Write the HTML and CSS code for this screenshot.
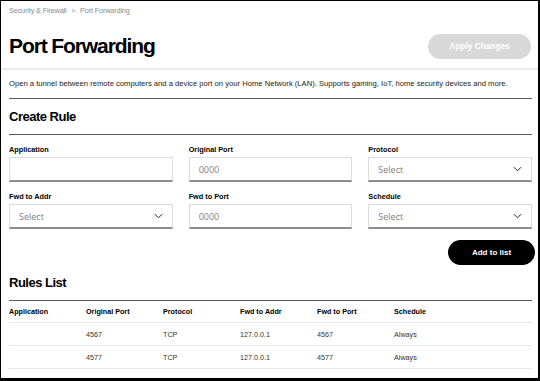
FILE: index.html
```html
<!DOCTYPE html>
<html lang="en">
<head>
  <meta charset="UTF-8" />
  <title>Port Forwarding</title>
  <link rel="stylesheet" href="styles.css">
</head>
<body>
  <header class="page-head">
    <nav class="crumbs">
      <a href="#">Security &amp; Firewall</a>
      <span class="sep">&gt;</span>
      <a href="#">Port Forwarding</a>
    </nav>
    <div class="title-row">
      <h1>Port Forwarding</h1>
      <button class="btn btn-muted" disabled>Apply Changes</button>
    </div>
  </header>

  <main class="content">
    <p class="intro">Open a tunnel between remote computers and a device port on your Home Network (LAN). Supports gaming, IoT, home security devices and more.</p>

    <section class="block">
      <h2>Create Rule</h2>
      <div class="form-grid">
        <label class="field">
          <span class="field-label">Application</span>
          <span class="control"></span>
        </label>
        <label class="field">
          <span class="field-label">Original Port</span>
          <span class="control placeholder">0000</span>
        </label>
        <label class="field">
          <span class="field-label">Protocol</span>
          <span class="control select">Select
            <svg class="chev" viewBox="0 0 10 6"><path d="M1 1l4 4 4-4" /></svg>
          </span>
        </label>
        <label class="field">
          <span class="field-label">Fwd to Addr</span>
          <span class="control select">Select
            <svg class="chev" viewBox="0 0 10 6"><path d="M1 1l4 4 4-4" /></svg>
          </span>
        </label>
        <label class="field">
          <span class="field-label">Fwd to Port</span>
          <span class="control placeholder">0000</span>
        </label>
        <label class="field">
          <span class="field-label">Schedule</span>
          <span class="control select">Select
            <svg class="chev" viewBox="0 0 10 6"><path d="M1 1l4 4 4-4" /></svg>
          </span>
        </label>
      </div>
      <div class="actions">
        <button class="btn btn-dark">Add to list</button>
      </div>
    </section>

    <section class="block">
      <h2>Rules List</h2>
      <div class="rules">
        <div class="rule rule-head">
          <span>Application</span>
          <span>Original Port</span>
          <span>Protocol</span>
          <span>Fwd to Addr</span>
          <span>Fwd to Port</span>
          <span>Schedule</span>
        </div>
        <div class="rule">
          <span></span>
          <span>4567</span>
          <span>TCP</span>
          <span>127.0.0.1</span>
          <span>4567</span>
          <span>Always</span>
        </div>
        <div class="rule">
          <span></span>
          <span>4577</span>
          <span>TCP</span>
          <span>127.0.0.1</span>
          <span>4577</span>
          <span>Always</span>
        </div>
      </div>
    </section>
  </main>
</body>
</html>
```

FILE: styles.css
```css
html, body {
  margin: 0;
  padding: 0;
}

body {
  box-sizing: border-box;
  width: 540px;
  height: 381px;
  overflow: hidden;
  border: solid #000;
  border-width: 1px 2px 3px 1px;
  background: #ffffff;
  color: #000000;
  font-family: "Liberation Sans", Arial, sans-serif;
}

.page-head {
  padding: 5px 7px 9px 8px;
  border-bottom: 2px solid #ececec;
}

.crumbs {
  font-size: 7.3px;
  line-height: 10px;
  color: #8a8a8a;
  letter-spacing: -0.15px;
}

.crumbs a {
  color: inherit;
  text-decoration: none;
}

.crumbs .sep {
  padding: 0 3px;
  font-size: 6.5px;
}

.title-row {
  display: flex;
  align-items: center;
  justify-content: space-between;
  margin-top: 17px;
}

h1 {
  margin: 0;
  font-size: 21px;
  line-height: 26px;
  font-weight: 700;
  letter-spacing: -1.1px;
}

.btn {
  border: none;
  border-radius: 13px;
  height: 25px;
  font-family: inherit;
  font-size: 8px;
  font-weight: 700;
  color: #ffffff;
  cursor: pointer;
}

.btn-muted {
  width: 103px;
  background: #d8d8d8;
  font-size: 8.3px;
  cursor: default;
}

.btn-dark {
  width: 87px;
  background: #000000;
}

.content {
  padding: 0 6px 0 8px;
}

.intro {
  margin: 0;
  padding: 9px 0;
  font-size: 7.65px;
  line-height: 10px;
  color: #222;
  border-bottom: 1px solid #5a5a5a;
}

h2 {
  margin: 0;
  padding: 10px 0 9px;
  font-size: 13px;
  line-height: 16px;
  font-weight: 700;
  letter-spacing: -0.5px;
  border-bottom: 1px solid #5a5a5a;
}

.form-grid {
  display: grid;
  grid-template-columns: repeat(3, 1fr);
  column-gap: 16px;
  row-gap: 10px;
  padding-top: 10px;
}

.field {
  display: flex;
  flex-direction: column;
  gap: 3px;
}

.field-label {
  font-size: 7.3px;
  line-height: 9px;
  font-weight: 700;
}

.control {
  box-sizing: border-box;
  display: flex;
  align-items: center;
  justify-content: space-between;
  height: 25px;
  padding: 0 9px;
  border: 1px solid #dcdcdc;
  border-bottom: 2px solid #8e8e8e;
  font-family: "Open Sans", sans-serif;
  font-size: 9px;
  color: #808080;
}

.chev {
  width: 9px;
  height: 6px;
  fill: none;
  stroke: #222;
  stroke-width: 1.1;
}

.actions {
  display: flex;
  justify-content: flex-end;
  margin: 11px -3px 0 0;
}

.block + .block h2 {
  padding-top: 10px;
}

.rule {
  display: grid;
  grid-template-columns: repeat(5, 77px) 1fr;
  align-items: center;
  height: 22px;
  border-bottom: 1px solid #e6e6e6;
  font-size: 7.2px;
  color: #333;
}

.rule-head {
  height: 21px;
  font-weight: 700;
  color: #000;
}
```
